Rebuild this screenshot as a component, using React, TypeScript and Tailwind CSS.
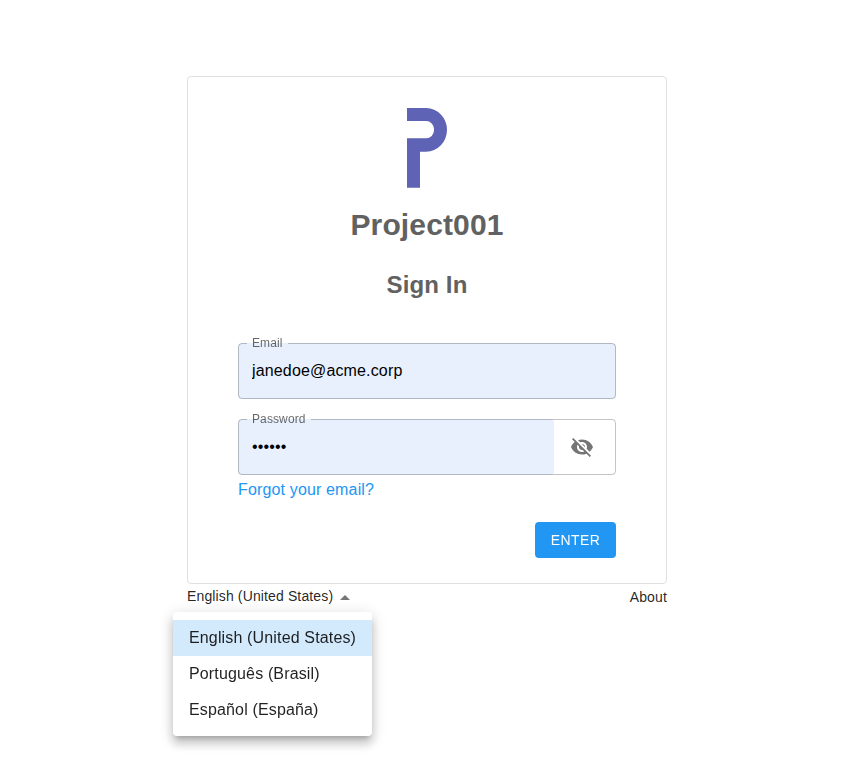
import React from "react";

const languages = ["English (United States)", "Português (Brasil)", "Español (España)"];

function Logo() {
  return (
    <svg width="40" height="80" viewBox="0 0 40 80" fill="#5f63b6" aria-hidden="true">
      <path d="M0 0H19.2A20.8 21.85 0 0 1 19.2 43.7H13V79.7H0V30.3H19.2A7.8 8 0 0 0 27 22.3V21.1A7.8 8 0 0 0 19.2 13.1H0Z" />
    </svg>
  );
}

function VisibilityOff() {
  return (
    <svg width="24" height="24" viewBox="0 0 24 24" fill="#757575" aria-hidden="true">
      <path d="M12 7c2.76 0 5 2.24 5 5 0 .65-.13 1.26-.36 1.83l2.92 2.92c1.51-1.26 2.7-2.89 3.43-4.75-1.73-4.39-6-7.5-11-7.5-1.4 0-2.74.25-3.98.7l2.16 2.16C10.74 7.13 11.35 7 12 7zM2 4.27l2.28 2.28.46.46C3.08 8.3 1.78 10.02 1 12c1.73 4.39 6 7.5 11 7.5 1.55 0 3.03-.3 4.38-.84l.42.42L19.73 22 21 20.73 3.27 3 2 4.27zM7.53 9.8l1.55 1.55c-.05.21-.08.43-.08.65 0 1.66 1.34 3 3 3 .22 0 .44-.03.65-.08l1.55 1.55c-.67.33-1.41.53-2.2.53-2.76 0-5-2.24-5-5 0-.79.2-1.53.53-2.2zm4.31-.78l3.15 3.15.02-.16c0-1.66-1.34-3-3-3l-.17.01z" />
    </svg>
  );
}

type FieldProps = { label: string; type: string; value: string; action?: React.ReactNode };

function Field({ label, type, value, action }: FieldProps) {
  return (
    <div className="relative flex h-14 w-full">
      <input
        type={type}
        defaultValue={value}
        aria-label={label}
        className="h-14 min-w-0 flex-1 rounded bg-[#e8f0fe] px-3.5 text-base leading-[23px] text-black outline-none"
      />
      {action && <div className="flex w-[62px] items-center justify-center pr-1.5">{action}</div>}
      <fieldset className="pointer-events-none absolute inset-x-0 -top-[5px] bottom-0 rounded border border-black/23 px-2">
        <legend className="h-[11px] px-[5px] text-xs leading-[11px] tracking-[0.11px] text-black/60">
          <span className="block will-change-transform">{label}</span>
        </legend>
      </fieldset>
    </div>
  );
}

export default function App() {
  return (
    <main className="h-[768px] overflow-hidden bg-white pt-[76px] pl-[187px] font-['Liberation_Sans',Arial,sans-serif] tracking-[0.15px] text-black/87">
      <div className="w-[480px]">
        <section className="flex h-[508px] flex-col items-center rounded border border-black/12 px-[50px] pt-[31px]">
          <Logo />
          <h1 className="mt-[16px] text-[30px] leading-[42px] font-bold tracking-[0.13px] text-[#616161]">Project001</h1>
          <h2 className="mt-[23px] text-2xl leading-8 font-bold tracking-[0.13px] text-[#616161]">Sign In</h2>
          <form className="mt-[42px] flex w-full flex-col">
            <Field label="Email" type="text" value="janedoe@acme.corp" />
            <div className="h-5" />
            <Field
              label="Password"
              type="password"
              value="123456"
              action={<button type="button" aria-label="Toggle password"><VisibilityOff /></button>}
            />
            <a href="#" className="mt-[3px] self-start text-base leading-6 text-[#2196f3]">Forgot your email?</a>
            <button type="button" className="mt-5 h-9 w-[81px] self-end rounded bg-[#2196f3] text-sm tracking-[0.4px] text-white">
              <span className="block will-change-transform">ENTER</span>
            </button>
          </form>
        </section>
        <footer className="flex items-start justify-between text-sm leading-5">
          <div className="relative flex pt-[2px]">
            <span className="tracking-[0.13px]">English (United States)</span>
            <svg width="24" height="24" viewBox="0 0 24 24" fill="#757575" aria-hidden="true">
              <path d="M7 14l5-5 5 5z" />
            </svg>
            <ul className="absolute top-7 -left-[14px] w-[199px] rounded bg-white py-2 text-base leading-6 whitespace-nowrap shadow-[0_5px_5px_-3px_rgba(0,0,0,0.2),0_8px_10px_1px_rgba(0,0,0,0.14),0_3px_14px_2px_rgba(0,0,0,0.12)] will-change-transform">
              {languages.map((language, index) => (
                <li key={language} className={index === 0 ? "bg-[#d3eafd] px-4 py-1.5" : "px-4 py-1.5"}>
                  {language}
                </li>
              ))}
            </ul>
          </div>
          <a href="#" className="pt-[3px]">About</a>
        </footer>
      </div>
    </main>
  );
}
